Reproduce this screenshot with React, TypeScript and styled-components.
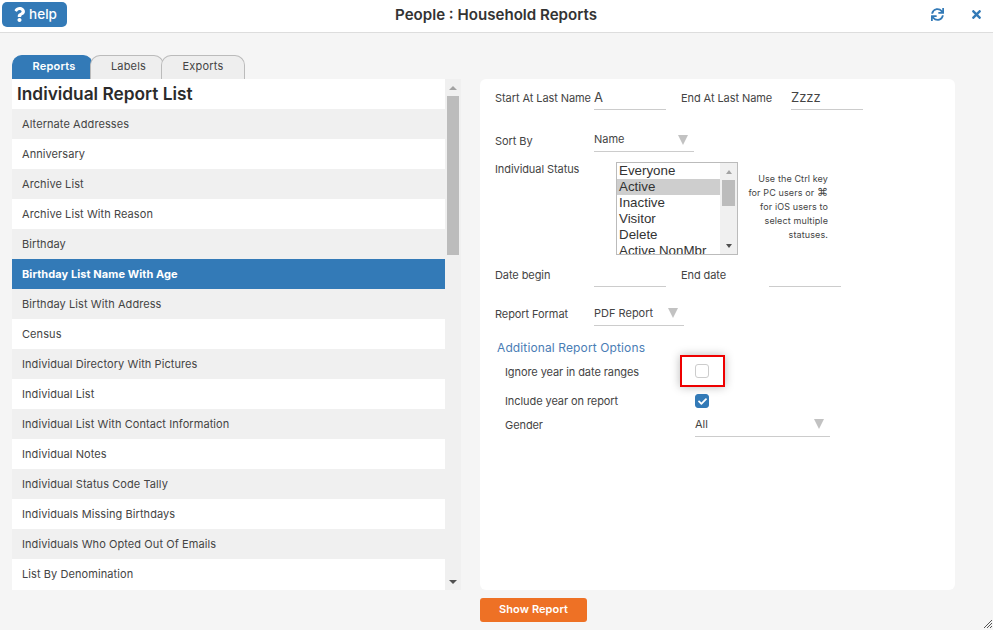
import React from 'react'
import styled, { createGlobalStyle } from 'styled-components'
import { FaQuestion, FaSync, FaTimes, FaCheck } from 'react-icons/fa'

const REPORTS = [
    'Alternate Addresses',
    'Anniversary',
    'Archive List',
    'Archive List With Reason',
    'Birthday',
    'Birthday List Name With Age',
    'Birthday List With Address',
    'Census',
    'Individual Directory With Pictures',
    'Individual List',
    'Individual List With Contact Information',
    'Individual Notes',
    'Individual Status Code Tally',
    'Individuals Missing Birthdays',
    'Individuals Who Opted Out Of Emails',
    'List By Denomination',
]

const STATUSES = ['Everyone', 'Active', 'Inactive', 'Visitor', 'Delete', 'Active NonMbr']

const GlobalStyle = createGlobalStyle`
    html, body {
        margin: 0;
        padding: 0;
        height: 630px;
        overflow: hidden;
        background: #f5f5f5;
        font-family: Inter, "Liberation Sans", sans-serif;
        color: #333;
    }
    * {
        box-sizing: border-box;
    }
`

const Page = styled.div`
    position: relative;
    width: 993px;
    height: 630px;
    display: flex;
    flex-direction: column;
`

const Header = styled.header`
    height: 33px;
    flex: none;
    background: #fff;
    border-bottom: 1px solid #ddd;
    display: flex;
    align-items: center;
    padding: 0 10px 1px 2px;
`

const HelpButton = styled.button`
    width: 65px;
    height: 25px;
    margin-top: -3px;
    border: none;
    border-radius: 5px;
    background: #337ab7;
    color: #fff;
    font: 500 13.5px Inter, sans-serif;
    display: flex;
    align-items: center;
    justify-content: center;
    gap: 2px;
    padding: 0;
`

const Title = styled.h1`
    flex: 1;
    margin: -3px 0 0;
    padding-right: 6px;
    text-align: center;
    font-size: 15.1px;
    font-weight: 600;
    color: #333;
`

const HeaderIcons = styled.div`
    display: flex;
    align-items: center;
    gap: 26px;
    margin-top: -3px;
    color: #337ab7;
    font-size: 13px;
`

const Content = styled.main`
    display: flex;
    gap: 19px;
    padding: 22px 0 0 12px;
`

const LeftColumn = styled.section`
    width: 449px;
    display: flex;
    flex-direction: column;
`

const Tabs = styled.nav`
    height: 24px;
    display: flex;
`

const Tab = styled.div<{ $active?: boolean; $width: number; $inset: number }>`
    width: ${p => p.$width}px;
    margin-right: -3px;
    padding-left: ${p => p.$inset}px;
    border: 1px solid ${p => (p.$active ? '#337ab7' : '#bbb')};
    border-bottom: none;
    border-radius: 10px 10px 0 0;
    background: ${p => (p.$active ? '#337ab7' : '#eee')};
    color: ${p => (p.$active ? '#fff' : '#444')};
    font-size: 11px;
    font-weight: ${p => (p.$active ? 600 : 400)};
    letter-spacing: 0.2px;
    text-align: center;
    line-height: 20px;
`

const ListArea = styled.div`
    height: 511px;
    display: flex;
`

const ReportList = styled.div`
    width: 433px;
    background: #fff;
`

const ListTitle = styled.h2`
    height: 30px;
    margin: 0;
    padding-left: 5px;
    font-size: 17.3px;
    font-weight: 600;
    line-height: 29px;
    color: #2b2b2b;
`

const ReportRow = styled.div<{ $striped: boolean; $selected: boolean }>`
    height: 30px;
    padding-left: 10px;
    line-height: 30px;
    font-size: 11px;
    letter-spacing: 0.08px;
    font-weight: ${p => (p.$selected ? 700 : 400)};
    color: ${p => (p.$selected ? '#fff' : '#444')};
    background: ${p => (p.$selected ? '#337ab7' : p.$striped ? '#f0f0f0' : '#fff')};
`

const ScrollTrack = styled.div`
    width: 16px;
    background: #f0f0f0;
    display: flex;
    flex-direction: column;
    align-items: center;
    padding: 0 2px;
`

const ScrollArrow = styled.div<{ $down?: boolean }>`
    flex: none;
    height: 17px;
    width: 100%;
    display: flex;
    align-items: center;
    justify-content: center;
    &::before {
        content: '';
        border-left: 4px solid transparent;
        border-right: 4px solid transparent;
        ${p => (p.$down ? 'border-top: 4px solid #505050;' : 'border-bottom: 4px solid #a3a3a3;')}
    }
`

const ScrollThumb = styled.div<{ $height: number }>`
    flex: none;
    width: 100%;
    height: ${p => p.$height}px;
    background: #bcbcbc;
`

const ScrollSpacer = styled.div`
    flex: 1;
`

const RightColumn = styled.section`
    width: 475px;
    margin-top: 24px;
`

const Panel = styled.div`
    height: 511px;
    padding: 8px 15px 0;
    background: #fff;
    border-radius: 6px;
    font-size: 11px;
    color: #444;
`

const Row = styled.div<{ $height: number }>`
    display: flex;
    align-items: flex-start;
    height: ${p => p.$height}px;
`

const Label = styled.span<{ $width: number }>`
    flex: none;
    width: ${p => p.$width}px;
    line-height: 22px;
    letter-spacing: -0.08px;
    white-space: nowrap;
`

const TextField = styled.div<{ $width: number; $gap?: number }>`
    flex: none;
    width: ${p => p.$width}px;
    margin-right: ${p => p.$gap ?? 0}px;
    height: 23px;
    border-bottom: 1px solid #ccc;
    font-size: 13px;
    line-height: 21px;
`

const SelectField = styled.div<{ $width: number; $compact?: boolean }>`
    flex: none;
    position: relative;
    width: ${p => p.$width}px;
    height: ${p => (p.$compact ? 22 : 23)}px;
    border-bottom: 1px solid #ccc;
    font-size: 11px;
    line-height: ${p => (p.$compact ? 18 : 20)}px;
    &::after {
        content: '';
        position: absolute;
        right: 6px;
        top: 5px;
        border-left: 5px solid transparent;
        border-right: 5px solid transparent;
        border-top: 10px solid #c2c2c2;
    }
`

const GenderSelect = styled(SelectField)`
    margin-top: -4px;
`

const StatusLabel = styled(Label)`
    line-height: 14px;
`

const ListBox = styled.div`
    flex: none;
    width: 122px;
    height: 93px;
    margin-left: 22px;
    border: 1px solid #bbb;
    display: flex;
    overflow: hidden;
`

const ListBoxItems = styled.div`
    flex: 1;
    font-family: "Liberation Sans", sans-serif;
    font-size: 13.33px;
    color: #333;
`

const ListBoxItem = styled.div<{ $selected: boolean }>`
    height: 16px;
    line-height: 16px;
    padding-left: 2px;
    white-space: nowrap;
    background: ${p => (p.$selected ? '#cecece' : 'transparent')};
`

const MiniTrack = styled.div`
    flex: none;
    width: 17px;
    background: #f0f0f0;
    display: flex;
    flex-direction: column;
    padding: 0 2px;
`

const MiniArrow = styled.div<{ $down?: boolean }>`
    flex: none;
    height: 17px;
    display: flex;
    align-items: center;
    justify-content: center;
    &::before {
        content: '';
        border-left: 3.5px solid transparent;
        border-right: 3.5px solid transparent;
        ${p => (p.$down ? 'border-top: 4px solid #505050;' : 'border-bottom: 4px solid #a3a3a3;')}
    }
`

const MiniThumb = styled.div`
    flex: none;
    height: 26px;
    background: #bcbcbc;
`

const Hint = styled.p`
    flex: none;
    width: 90px;
    margin: 10px 0 0;
    text-align: right;
    font-size: 9px;
    line-height: 14px;
    letter-spacing: 0.12px;
    color: #444;
`

const CommandGlyph = styled.span`
    font-family: "DejaVu Sans", sans-serif;
    font-size: 11px;
    line-height: 10px;
`

const SectionTitle = styled.h3`
    margin: 0 0 0 2px;
    height: 26px;
    font-size: 12px;
    line-height: 18px;
    font-weight: 400;
    letter-spacing: 0.12px;
    color: #4a7db5;
`

const OptionRow = styled.div<{ $height: number }>`
    display: flex;
    align-items: flex-start;
    height: ${p => p.$height}px;
    padding-left: 10px;
`

const OptionLabel = styled.span`
    flex: none;
    width: 190px;
    line-height: 14px;
    letter-spacing: -0.08px;
`

const Highlight = styled.div`
    flex: none;
    width: 45px;
    height: 32px;
    margin: -10px 0 0 -15px;
    padding-right: 1px;
    border: 2px solid #ee0000;
    box-shadow: 0 0 10px rgba(0, 0, 0, 0.28);
    display: flex;
    align-items: center;
    justify-content: center;
`

const CheckBox = styled.div<{ $checked?: boolean }>`
    flex: none;
    width: 14px;
    height: 14px;
    border-radius: 3px;
    border: 1px solid ${p => (p.$checked ? '#337ab7' : '#ccc')};
    background: ${p => (p.$checked ? '#337ab7' : '#fff')};
    color: #fff;
    font-size: 9px;
    display: flex;
    align-items: center;
    justify-content: center;
`

const ShowReportButton = styled.button`
    display: block;
    width: 107px;
    height: 24px;
    margin-top: 8px;
    border: none;
    border-radius: 3px;
    background: #ee7125;
    color: #fff;
    font: 600 11px Inter, sans-serif;
    letter-spacing: 0.1px;
    padding: 0 0 2px;
`

const ResizeHandle = styled.svg`
    position: absolute;
    right: 1px;
    bottom: 2px;
`

const App = () => {
    return (
        <Page>
            <GlobalStyle />
            <Header>
                <HelpButton>
                    <FaQuestion size={15} />
                    help
                </HelpButton>
                <Title>People : Household Reports</Title>
                <HeaderIcons>
                    <FaSync />
                    <FaTimes />
                </HeaderIcons>
            </Header>
            <Content>
                <LeftColumn>
                    <Tabs>
                        <Tab $active $width={81} $inset={3}>Reports</Tab>
                        <Tab $width={74} $inset={3}>Labels</Tab>
                        <Tab $width={84} $inset={0}>Exports</Tab>
                    </Tabs>
                    <ListArea>
                        <ReportList>
                            <ListTitle>Individual Report List</ListTitle>
                            {REPORTS.map((name, i) => (
                                <ReportRow key={name} $striped={i % 2 === 0} $selected={i === 5}>
                                    {name}
                                </ReportRow>
                            ))}
                        </ReportList>
                        <ScrollTrack>
                            <ScrollArrow />
                            <ScrollThumb $height={159} />
                            <ScrollSpacer />
                            <ScrollArrow $down />
                        </ScrollTrack>
                    </ListArea>
                </LeftColumn>
                <RightColumn>
                    <Panel>
                        <Row $height={43}>
                            <Label $width={99}>Start At Last Name</Label>
                            <TextField $width={72} $gap={15}>A</TextField>
                            <Label $width={110}>End At Last Name</Label>
                            <TextField $width={72}>Zzzz</TextField>
                        </Row>
                        <Row $height={32}>
                            <Label $width={99}>Sort By</Label>
                            <SelectField $width={100} $compact>Name</SelectField>
                        </Row>
                        <Row $height={102}>
                            <StatusLabel $width={99}>Individual Status</StatusLabel>
                            <ListBox>
                                <ListBoxItems>
                                    {STATUSES.map(status => (
                                        <ListBoxItem key={status} $selected={status === 'Active'}>
                                            {status}
                                        </ListBoxItem>
                                    ))}
                                </ListBoxItems>
                                <MiniTrack>
                                    <MiniArrow />
                                    <MiniThumb />
                                    <ScrollSpacer />
                                    <MiniArrow $down />
                                </MiniTrack>
                            </ListBox>
                            <Hint>
                                Use the Ctrl key
                                <br />
                                for PC users or <CommandGlyph>⌘</CommandGlyph>
                                <br />
                                for iOS users to
                                <br />
                                select multiple
                                <br />
                                statuses.
                            </Hint>
                        </Row>
                        <Row $height={39}>
                            <Label $width={99}>Date begin</Label>
                            <TextField $width={72} $gap={15} />
                            <Label $width={88}>End date</Label>
                            <TextField $width={72} />
                        </Row>
                        <Row $height={36}>
                            <Label $width={99}>Report Format</Label>
                            <SelectField $width={90}>PDF Report</SelectField>
                        </Row>
                        <SectionTitle>Additional Report Options</SectionTitle>
                        <OptionRow $height={29}>
                            <OptionLabel>Ignore year in date ranges</OptionLabel>
                            <Highlight>
                                <CheckBox />
                            </Highlight>
                        </OptionRow>
                        <OptionRow $height={24}>
                            <OptionLabel>Include year on report</OptionLabel>
                            <CheckBox $checked>
                                <FaCheck />
                            </CheckBox>
                        </OptionRow>
                        <OptionRow $height={24}>
                            <OptionLabel>Gender</OptionLabel>
                            <GenderSelect $width={135}>All</GenderSelect>
                        </OptionRow>
                    </Panel>
                    <ShowReportButton>Show Report</ShowReportButton>
                </RightColumn>
            </Content>
            <ResizeHandle width="8" height="8" viewBox="0 0 8 8">
                <path d="M0 8L8 0M3 8L8 3M6 8L8 6" stroke="#555" strokeWidth="1" />
            </ResizeHandle>
        </Page>
    )
}

export default App
